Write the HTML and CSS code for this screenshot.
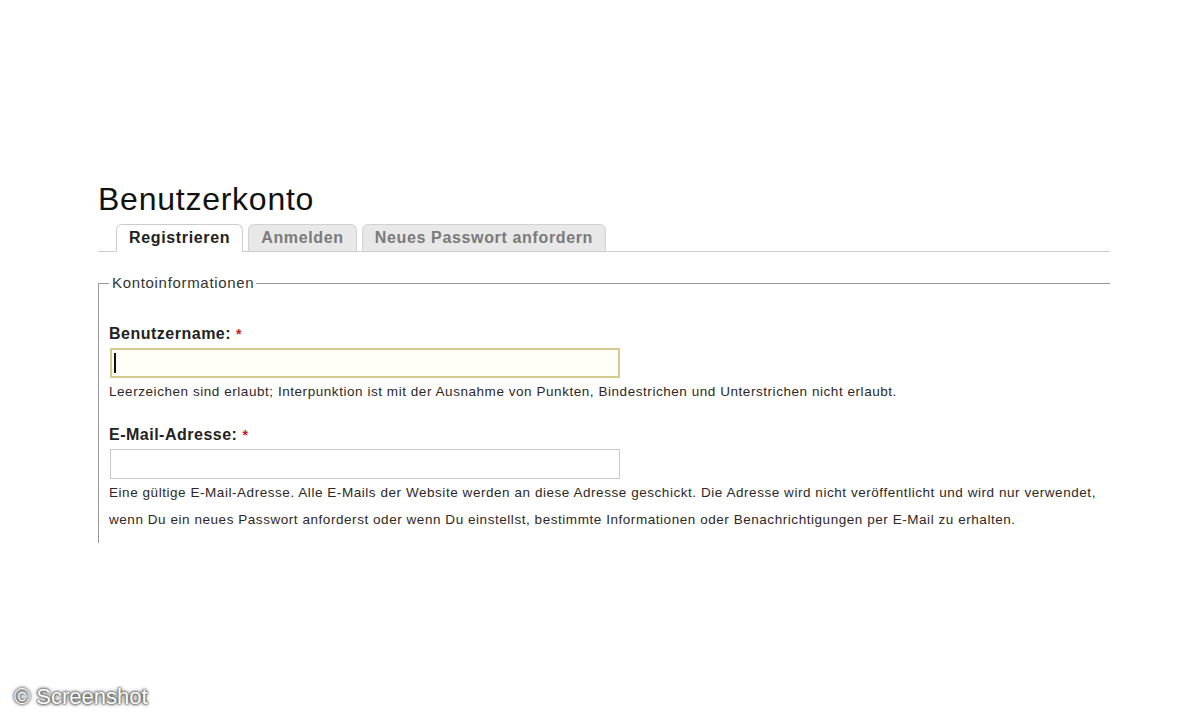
FILE: index.html
```html
<!DOCTYPE html>
<html lang="de">
<head>
<meta charset="utf-8">
<title>Benutzerkonto</title>
<link rel="stylesheet" href="styles.css">
</head>
<body>
<div class="page">
  <h1 class="title">Benutzerkonto</h1>
  <ul class="tabs">
    <li class="tab active">Registrieren</li>
    <li class="tab">Anmelden</li>
    <li class="tab">Neues Passwort anfordern</li>
  </ul>
  <fieldset class="group">
    <legend class="group-legend">Kontoinformationen</legend>
    <div class="item">
      <label class="label" for="name">Benutzername: <span class="req">*</span></label>
      <div class="field-wrap">
        <input class="field focused" id="name" type="text">
        <span class="caret"></span>
      </div>
      <div class="desc">Leerzeichen sind erlaubt; Interpunktion ist mit der Ausnahme von Punkten, Bindestrichen und Unterstrichen nicht erlaubt.</div>
    </div>
    <div class="item">
      <label class="label" for="mail">E-Mail-Adresse: <span class="req">*</span></label>
      <div class="field-wrap">
        <input class="field" id="mail" type="text">
      </div>
      <div class="desc">Eine gültige E-Mail-Adresse. Alle E-Mails der Website werden an diese Adresse geschickt. Die Adresse wird nicht veröffentlicht und wird nur verwendet, wenn Du ein neues Passwort anforderst oder wenn Du einstellst, bestimmte Informationen oder Benachrichtigungen per E-Mail zu erhalten.</div>
    </div>
  </fieldset>
</div>
<div class="watermark">© Screenshot</div>
</body>
</html>
```

FILE: styles.css
```css
html, body {
  margin: 0;
  padding: 0;
  background: #ffffff;
}
body {
  font-family: "Liberation Sans", Arial, sans-serif;
  color: #222;
  width: 1200px;
  height: 720px;
  overflow: hidden;
  position: relative;
}
.page {
  padding: 179px 0 0 98px;
  width: 1012px;
}
.title {
  margin: 0;
  font-size: 32px;
  line-height: 40px;
  font-weight: normal;
  letter-spacing: 0.75px;
  color: #111;
}
.tabs {
  list-style: none;
  margin: 5px 0 0 0;
  padding: 0 0 0 18px;
  display: flex;
  gap: 5px;
  border-bottom: 1px solid #cfcfcf;
  height: 27px;
}
.tab {
  font-size: 16px;
  font-weight: bold;
  letter-spacing: 0.65px;
  line-height: 26px;
  height: 26px;
  padding: 0 12px;
  border: 1px solid #d2d2d2;
  border-bottom: none;
  border-radius: 6px 6px 0 0;
  background: #e8e8e8;
  color: #7a7a7a;
}
.tab.active {
  background: #ffffff;
  color: #222;
  height: 27px;
  border-color: #cccccc;
}
.group {
  margin: 22px 0 0 0;
  padding: 0 0 10px 10px;
  border: none;
  border-top: 1px solid #999;
  border-left: 1px solid #999;
  min-width: 0;
}
.group-legend {
  padding: 0 2px 0 3px;
  font-size: 15px;
  line-height: 18px;
  letter-spacing: 0.68px;
  color: #333;
}
.item {
  margin-top: 32px;
}
.item + .item {
  margin-top: 20px;
}
.label {
  display: block;
  font-size: 16px;
  font-weight: bold;
  letter-spacing: 0.5px;
  line-height: 20px;
  margin-bottom: 4px;
  color: #222;
}
.req {
  color: #c02020;
  font-size: 14px;
}
.field-wrap {
  position: relative;
  width: 510px;
  margin-left: 1px;
}
.field {
  display: block;
  box-sizing: border-box;
  width: 510px;
  height: 30px;
  margin: 0;
  border: 1px solid #c9c9c9;
  background: #ffffff;
  outline: none;
  font-family: "Liberation Sans", Arial, sans-serif;
}
.field.focused {
  border: 2px solid #d6cb8f;
  background: #fffef7;
}
.caret {
  position: absolute;
  left: 4px;
  top: 5px;
  width: 2px;
  height: 20px;
  background: #111;
}
.desc {
  font-size: 13.5px;
  line-height: 27px;
  letter-spacing: 0.55px;
  color: #2e2727;
  padding-right: 4px;
}
.watermark {
  position: absolute;
  left: 14px;
  top: 684px;
  font-family: "Liberation Sans", Arial, sans-serif;
  font-size: 22px;
  color: #ffffff;
  text-shadow: 0 0 2px #444, 0 0 3px #444, 0 0 4px #666;
}
```
